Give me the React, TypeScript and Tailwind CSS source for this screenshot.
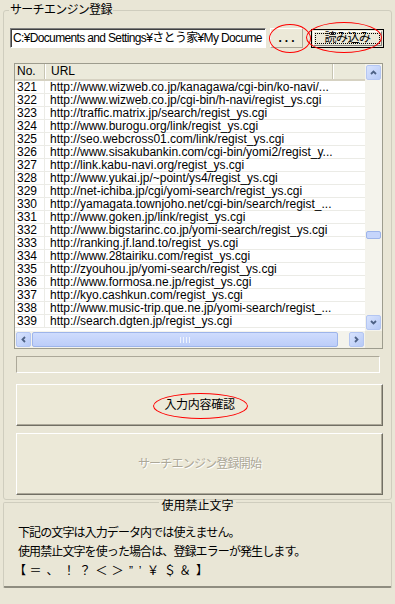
import React from "react";

const rows: [number, string][] = [
  [321, "http://www.wizweb.co.jp/kanagawa/cgi-bin/ko-navi/..."],
  [322, "http://www.wizweb.co.jp/cgi-bin/h-navi/regist_ys.cgi"],
  [323, "http://traffic.matrix.jp/search/regist_ys.cgi"],
  [324, "http://www.burogu.org/link/regist_ys.cgi"],
  [325, "http://seo.webcross01.com/link/regist_ys.cgi"],
  [326, "http://www.sisakubankin.com/cgi-bin/yomi2/regist_y..."],
  [327, "http://link.kabu-navi.org/regist_ys.cgi"],
  [328, "http://www.yukai.jp/~point/ys4/regist_ys.cgi"],
  [329, "http://net-ichiba.jp/cgi/yomi-search/regist_ys.cgi"],
  [330, "http://yamagata.townjoho.net/cgi-bin/search/regist_..."],
  [331, "http://www.goken.jp/link/regist_ys.cgi"],
  [332, "http://www.bigstarinc.co.jp/yomi-search/regist_ys.cgi"],
  [333, "http://ranking.jf.land.to/regist_ys.cgi"],
  [334, "http://www.28tairiku.com/regist_ys.cgi"],
  [335, "http://zyouhou.jp/yomi-search/regist_ys.cgi"],
  [336, "http://www.formosa.ne.jp/regist_ys.cgi"],
  [337, "http://kyo.cashkun.com/regist_ys.cgi"],
  [338, "http://www.music-trip.que.ne.jp/yomi-search/regist_..."],
  [339, "http://search.dgten.jp/regist_ys.cgi"],
];

// 使用禁止文字（幅は参照画像の文字位置に合わせる）
const banned: [string, string][] = [
  ["【", "w-[14px]"],
  ["＝", "w-[17px]"],
  ["、", "w-[17px]"],
  ["！", "w-[16px]"],
  ["？", "w-[16px]"],
  ["＜", "w-[17px]"],
  ["＞", "w-[15px]"],
  ["”", "w-[12px]"],
  ["’", "w-[6px]"],
  ["￥", "w-[20px]"],
  ["＄", "w-[14px]"],
  ["＆", "w-[16px]"],
  ["】", "w-[18px]"],
];

function Chevron({ dir }: { dir: "up" | "down" | "left" | "right" }) {
  const d = {
    up: "M2 6 L4.5 3.5 L7 6",
    down: "M2 3 L4.5 5.5 L7 3",
    left: "M6 2 L3.5 4.5 L6 7",
    right: "M3 2 L5.5 4.5 L3 7",
  }[dir];
  return (
    <svg width="9" height="9" viewBox="0 0 9 9">
      <path d={d} fill="none" stroke="#4D6185" strokeWidth="1.8" />
    </svg>
  );
}

function ScrollButton({ dir }: { dir: "up" | "down" | "left" | "right" }) {
  return (
    <div className="w-[17px] h-[17px] p-[1px] shrink-0">
      <div className="w-full h-full rounded-[2px] border border-[#B4C6F2] bg-gradient-to-br from-[#D8E3FD] to-[#B7CAF7] flex items-center justify-center">
        <Chevron dir={dir} />
      </div>
    </div>
  );
}

export default function App() {
  return (
    <div className="relative w-[395px] h-[604px] overflow-hidden bg-[#E9E6D6] text-[12px] text-black font-['Liberation_Sans','Noto_Sans_CJK_JP',sans-serif]">
      {/* サーチエンジン登録 */}
      <fieldset className="mx-[3px] mt-[2px] h-[498px] border border-[#CFCDBE] rounded-[3px]">
        <legend className="ml-[5px] px-[1px] leading-[16px] tracking-[-0.7px]">サーチエンジン登録</legend>

        <div className="flex items-center mt-[10px] ml-[6px]">
          <div className="w-[256px] h-[20px] border border-t-[#808080] border-l-[#808080] border-b-white border-r-white shadow-[inset_1px_1px_0_#404040] bg-white overflow-hidden whitespace-nowrap pl-[2px] leading-[18px] tracking-[-0.65px]">
            C:¥Documents and Settings¥さとう家¥My Docume
          </div>
          <button className="ml-[4px] w-[33px] h-[20px] border border-t-white border-l-white border-b-[#ACA899] border-r-[#ACA899] bg-[#ECE9D8] font-bold tracking-[3px] leading-[14px] pl-[3px]">
            ...
          </button>
          <button className="ml-[8px] w-[73px] h-[19px] border border-black bg-[#ECE9D8] p-[1px]">
            <div className="w-full h-full border border-t-white border-l-white border-b-[#808080] border-r-[#808080] p-[1px]">
              <div className="w-full h-full border border-dotted border-black flex items-center justify-center leading-[12px] tracking-[-0.5px]">
                読み込み
              </div>
            </div>
          </button>
        </div>

        {/* リスト */}
        <div className="mt-[15px] ml-[10px] w-[369px] h-[286px] border border-[#9D9C8E] bg-white flex flex-col">
          <div className="flex flex-1 min-h-0">
            <div className="flex-1 flex flex-col">
              <div className="h-[17px] flex bg-[#EBEADB] border-b-2 border-[#D6D2C2] leading-[15px]">
                <div className="w-[30px] border-r border-[#C7C5B2] pl-[2px]">No.</div>
                <div className="w-[288px] border-r border-[#C7C5B2] pl-[5px] border-l border-l-white">URL</div>
                <div className="flex-1 border-l border-white" />
              </div>
              <div className="flex-1 overflow-hidden">
                {rows.map(([no, url]) => (
                  <div key={no} className="flex h-[13px] leading-[13px] shadow-[inset_0_-1px_0_#EBEBE6] whitespace-nowrap">
                    <div className="w-[30px] pl-[2px] shadow-[inset_-1px_0_0_#EBEBE6]">{no}</div>
                    <div className="w-[288px] pl-[5px]">{url}</div>
                  </div>
                ))}
              </div>
            </div>
            {/* 縦スクロール */}
            <div className="w-[17px] flex flex-col bg-[#F4F3EC]">
              <ScrollButton dir="up" />
              <div className="h-[150px]" />
              <div className="mx-[1px] h-[8px] rounded-[2px] border border-[#9DB4EA] bg-[#C6D5FB]" />
              <div className="flex-1" />
              <ScrollButton dir="down" />
            </div>
          </div>
          {/* 横スクロール */}
          <div className="h-[17px] flex bg-[#F4F3EC]">
            <ScrollButton dir="left" />
            <div className="flex-1 flex py-[1px]">
              <div className="w-[306px] rounded-[2px] border border-[#9DB4EA] bg-gradient-to-b from-[#CFDCFD] to-[#BCCDF9] flex items-center justify-center gap-[2px]">
                <div className="w-[1px] h-[6px] bg-[#EEF3FE]" />
                <div className="w-[1px] h-[6px] bg-[#EEF3FE]" />
                <div className="w-[1px] h-[6px] bg-[#EEF3FE]" />
                <div className="w-[1px] h-[6px] bg-[#EEF3FE]" />
              </div>
            </div>
            <ScrollButton dir="right" />
            <div className="w-[17px] bg-[#E9E6D6]" />
          </div>
        </div>

        {/* ステータス */}
        <div className="mt-[7px] ml-[12px] w-[364px] h-[17px] border border-t-[#ACA899] border-l-[#ACA899] border-b-white border-r-white" />

        <button className="mt-[11px] ml-[12px] w-[367px] h-[42px] border border-t-white border-l-white border-b-[#716F64] border-r-[#716F64] shadow-[inset_-1px_-1px_0_#ACA899] bg-[#ECE9D8] flex items-center justify-center tracking-[-0.3px]">
          入力内容確認
        </button>
        <button
          disabled
          className="mt-[7px] ml-[12px] w-[367px] h-[62px] border border-t-white border-l-white border-b-[#716F64] border-r-[#716F64] shadow-[inset_-1px_-1px_0_#ACA899] bg-[#ECE9D8] flex items-center justify-center text-[#ACA899] [text-shadow:1px_1px_0_#fff] tracking-[-0.8px]"
        >
          サーチエンジン登録開始
        </button>
      </fieldset>

      {/* 使用禁止文字 */}
      <fieldset className="mx-[3px] mt-[-8px] h-[96px] border border-[#CFCDBE] border-b-2 border-b-[#8F8D80] rounded-[2px] px-[14px]">
        <legend className="mx-auto pt-[8px] px-[2px] leading-[12px]">使用禁止文字</legend>
        <div className="mt-[11px] leading-[20px] tracking-[-0.9px]">下記の文字は入力データ内では使えません。</div>
        <div className="leading-[19px] tracking-[-0.9px]">使用禁止文字を使った場合は、登録エラーが発生します。</div>
        <div className="flex leading-[19px] -ml-[5px]">
          {banned.map(([ch, w], i) => (
            <span key={i} className={`${w} text-center`}>
              {ch}
            </span>
          ))}
        </div>
      </fieldset>

      {/* 赤い丸 */}
      <div className="absolute left-[269px] top-[24px] w-[42px] h-[29px] rounded-[50%] border border-[#FF0000]" />
      <div className="absolute left-[306px] top-[22px] w-[76px] h-[31px] rounded-[50%] border border-[#FF0000]" />
      <div className="absolute left-[153px] top-[393px] w-[95px] h-[26px] rounded-[50%] border border-[#FF0000]" />
    </div>
  );
}
